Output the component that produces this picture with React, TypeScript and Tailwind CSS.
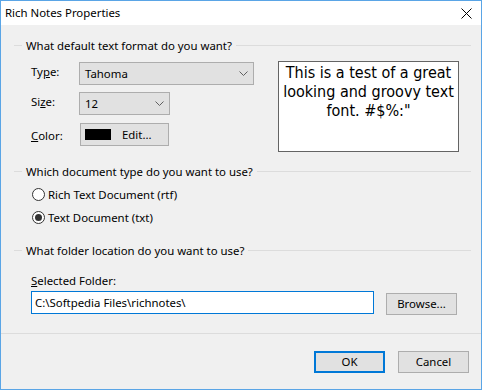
import React from "react";

const font = { fontFamily: '"Noto Sans", "Open Sans", sans-serif' };

function Chevron() {
  return (
    <svg width="9" height="5" viewBox="0 0 9 5" className="block">
      <path d="M0.5 0.5 L4.5 4.5 L8.5 0.5" fill="none" stroke="#606060" strokeWidth="1" />
    </svg>
  );
}

function GroupHeader({ text }: { text: string }) {
  return (
    <div className="flex items-center h-[15px]">
      <div className="w-[8px] h-px bg-[#dcdcdc]" />
      <span className="px-[4px] text-[11.4px] leading-[15px] text-black whitespace-nowrap">{text}</span>
      <div className="flex-1 h-px bg-[#dcdcdc]" />
    </div>
  );
}

function Radio({ checked, label }: { checked?: boolean; label: string }) {
  return (
    <div className="flex items-center h-[15px]">
      <div className="w-[13px] h-[13px] rounded-full border border-[#333333] bg-white flex items-center justify-center">
        {checked && <div className="w-[7px] h-[7px] rounded-full bg-[#333333]" />}
      </div>
      <span className="ml-[3px] text-[11.4px] text-black">{label}</span>
    </div>
  );
}

export default function App() {
  return (
    <div className="w-[482px] h-[390px] border border-[#5aa5e6] bg-[#f0f0f0] flex flex-col overflow-hidden" style={font}>
      <div className="h-[24px] bg-white flex items-center justify-between pl-[4px] pr-[9px] shrink-0">
        <span className="text-[11.4px] text-black">Rich Notes Properties</span>
        <svg width="11" height="11" viewBox="0 0 11 11">
          <path d="M0.5 0.5 L10.5 10.5 M10.5 0.5 L0.5 10.5" stroke="#000" strokeWidth="1" />
        </svg>
      </div>

      <div className="pl-[13px] pr-[10px] pt-[13px]">
        <GroupHeader text="What default text format do you want?" />
        <div className="flex mt-[9px]">
          <div className="flex flex-col pl-[17px] w-[253px]">
            <div className="flex items-center h-[23px]">
              <span className="w-[48px] text-[11.4px] text-black -mt-[4px]">Ty<u>p</u>e:</span>
              <div className="w-[175px] h-[23px] bg-[#e1e1e1] border border-[#adadad] flex items-center justify-between pl-[5px] pr-[5px]">
                <span className="text-[11.4px] text-black">Tahoma</span>
                <Chevron />
              </div>
            </div>
            <div className="flex items-center h-[23px] mt-[7px]">
              <span className="w-[48px] text-[11.4px] text-black -mt-[4px]">Si<u>z</u>e:</span>
              <div className="w-[91px] h-[23px] bg-[#e1e1e1] border border-[#adadad] flex items-center justify-between pl-[5px] pr-[5px]">
                <span className="text-[11.4px] text-black">12</span>
                <Chevron />
              </div>
            </div>
            <div className="flex items-center h-[23px] mt-[8px]">
              <span className="w-[49px] text-[11.4px] text-black mt-[2px]"><u>C</u>olor:</span>
              <div className="w-[89px] h-[23px] bg-[#e1e1e1] border border-[#adadad] flex items-center pl-[4px]">
                <div className="w-[26px] h-[11px] bg-black" />
                <span className="ml-[11px] text-[11.4px] text-black">Edit...</span>
              </div>
            </div>
          </div>
          <div
            className="ml-[11px] -mt-[1px] w-[181px] h-[91px] bg-white border border-[#646464] text-center text-[16px] leading-[19px] text-black pt-[1px] px-[2px]"
            style={{ fontFamily: '"DejaVu Sans Condensed", "DejaVu Sans", sans-serif' }}
          >
            This is a test of a great looking and groovy text font. #$%:"
          </div>
        </div>

        <div className="mt-[12px]">
          <GroupHeader text="Which document type do you want to use?" />
        </div>
        <div className="pl-[18px] mt-[8px] flex flex-col gap-[8px]">
          <Radio label="Rich Text Document (rtf)" />
          <Radio checked label="Text Document (txt)" />
        </div>

        <div className="mt-[18px]">
          <GroupHeader text="What folder location do you want to use?" />
        </div>
        <div className="pl-[17px] mt-[15px]">
          <div className="text-[11.4px] leading-[15px] text-black"><u>S</u>elected Folder:</div>
          <div className="flex items-start mt-[3px]">
            <div className="w-[343px] h-[23px] bg-white border border-[#0078d7] flex items-center pl-[3px] text-[11.4px] text-black">
              C:\Softpedia Files\richnotes\
            </div>
            <div className="ml-[12px] mt-[2px] w-[71px] h-[22px] bg-[#e1e1e1] border border-[#adadad] flex items-center justify-center text-[11.4px] text-black">
              Browse...
            </div>
          </div>
        </div>
      </div>

      <div className="mt-[18px] h-px bg-[#dcdcdc]" />

      <div className="flex justify-end gap-[13px] pr-[12px] mt-[17px]">
        <div className="w-[71px] h-[22px] bg-[#e1e1e1] border-2 border-[#0078d7] flex items-center justify-center text-[11.4px] text-black">
          OK
        </div>
        <div className="w-[71px] h-[22px] bg-[#e1e1e1] border border-[#adadad] flex items-center justify-center text-[11.4px] text-black">
          Cancel
        </div>
      </div>
    </div>
  );
}
